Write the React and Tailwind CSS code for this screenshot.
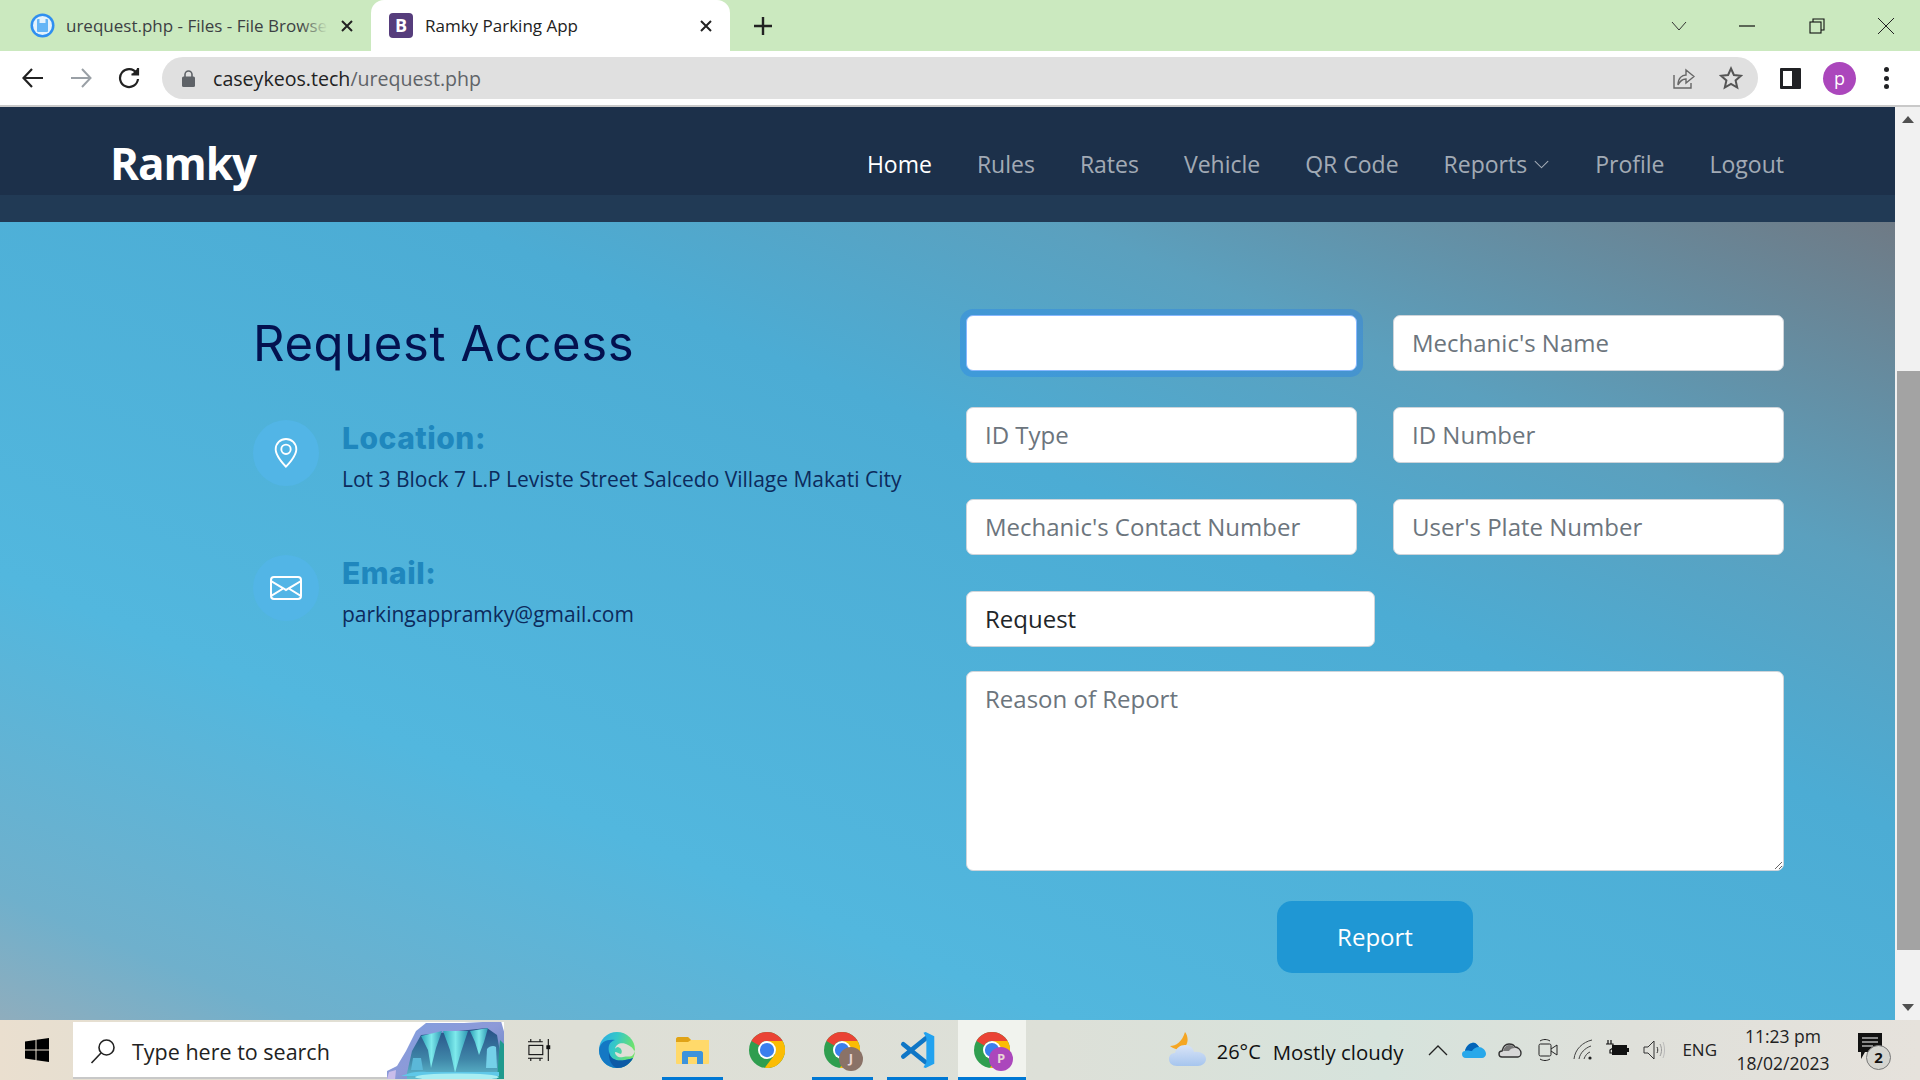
import React from 'react';
import { BsGeoAlt, BsEnvelope, BsChevronDown } from 'react-icons/bs';

function ChromeIcon({ size = 36 }) {
  return (
    <svg width={size} height={size} viewBox="0 0 48 48">
      <circle cx="24" cy="24" r="24" fill="#2f9e4f" />
      <path d="M3.22 12A24 24 0 0 1 44.78 12L24 12A12 12 0 0 0 13.6 18Z" fill="#ea4335" />
      <path d="M44.78 12A24 24 0 0 1 21 47.8L34.4 30L36 24L24 12Z" fill="#fbbc04" />
      <circle cx="24" cy="24" r="12" fill="#fff" />
      <circle cx="24" cy="24" r="9.5" fill="#3b7fed" />
    </svg>
  );
}

function ChromeBadge({ letter, color }) {
  return (
    <div className="relative w-[36px] h-[36px]">
      <ChromeIcon />
      <div className={`absolute left-[15px] top-[15px] w-[24px] h-[24px] rounded-full flex items-center justify-center text-[13px] font-bold text-[#e8d5d5] ${color}`}>
        {letter}
      </div>
    </div>
  );
}

function EdgeIcon() {
  return (
    <svg width="36" height="36" viewBox="0 0 36 36">
      <defs>
        <linearGradient id="edgeTop" x1="0" y1="0" x2="1" y2="0.3">
          <stop offset="0" stopColor="#2aa7e8" />
          <stop offset="0.5" stopColor="#35c8c8" />
          <stop offset="1" stopColor="#6fe36b" />
        </linearGradient>
      </defs>
      <circle cx="18" cy="18" r="18" fill="url(#edgeTop)" />
      <path d="M0 18C1 9 9 7 16 8C10 10 9 14 10 20C11 27 18 30 26 28C30 27 33 27 34 26C30 33 24 36 18 36C8 36 0 28 0 18Z" fill="#1478c4" />
      <path d="M10 20C11 27 18 30 26 28C30 27 33 27 34 26C30 33 24 36 18 36C13 35 9 27 10 20Z" fill="#0d5aa6" />
      <path d="M16 17C17 11 24 10 29 13C33 15 36 18 35 21C32 23 26 22 22 22C24 19 22 16 19 15C17.5 15 16.5 16 16 17Z" fill="#dfdfd7" />
      <path d="M16 20C16 24 20 26 24 25C28 24 30 25 33 24C35 22 36 20 36 18C33 22 27 22 23 22C20 22 18 20 16 20Z" fill="#dfdfd7" />
    </svg>
  );
}

function ExplorerIcon() {
  return (
    <svg width="33" height="27" viewBox="0 0 33 27">
      <path d="M0 2C0 1 1 0 2 0H12L15 3H33V26C33 26.5 32.5 27 32 27H1C0.5 27 0 26.5 0 26Z" fill="#ffd96a" />
      <path d="M0 2C0 1 1 0 2 0H12L15 3L12 5H0Z" fill="#e0a316" />
      <path d="M6 27V16C6 15 7 14 8 14H25C26 14 27 15 27 16V27H21V20H12V27Z" fill="#3d93dc" />
    </svg>
  );
}

function VsCodeIcon() {
  return (
    <svg width="36" height="36" viewBox="0 0 100 100">
      <path d="M12 34L74 84M12 68L74 18" stroke="#0f76c6" strokeWidth="13" strokeLinecap="round" fill="none" />
      <path d="M68 2L74 0L98 12V88L74 100L68 98L76 84V16Z" fill="#22a2ef" />
    </svg>
  );
}

function IceCave() {
  return (
    <svg width="117" height="57" viewBox="0 2 117 57" className="shrink-0 block">
      <defs>
        <linearGradient id="caveInner" x1="0" y1="0" x2="0" y2="1">
          <stop offset="0" stopColor="#264f86" />
          <stop offset="0.6" stopColor="#3f86a8" />
          <stop offset="1" stopColor="#62bfd0" />
        </linearGradient>
        <linearGradient id="caveOuter" x1="0" y1="0" x2="1" y2="1">
          <stop offset="0" stopColor="#7f9fe0" />
          <stop offset="0.5" stopColor="#8d9ad8" />
          <stop offset="1" stopColor="#5d7fc0" />
        </linearGradient>
        <linearGradient id="icicle" x1="0" y1="0" x2="1" y2="0">
          <stop offset="0" stopColor="#2fa4ba" />
          <stop offset="0.5" stopColor="#7eeaec" />
          <stop offset="1" stopColor="#2f98b4" />
        </linearGradient>
      </defs>
      <path d="M-1 60L0 51L10 46L19 31L29 11L39 3L77 3L114 1L118 15V60Z" fill="url(#caveOuter)" />
      <path d="M0 59L2 52L9 50L8 60Z" fill="#c9bdea" />
      <path d="M20 53L25 31L34 15L100 8L110 15L114 38L112 60H20Z" fill="url(#caveInner)" />
      <path d="M113 20L117 24V60H110Z" fill="#1f9a8e" />
      <path d="M34 16L55 11L49 28L44 48L41 30Z" fill="url(#icicle)" />
      <path d="M56 11L81 11L74 32L68 53L63 30Z" fill="url(#icicle)" />
      <path d="M83 11L101 8L97 22L92 35L88 22Z" fill="url(#icicle)" />
      <path d="M26 38L34 38L36 50H24Z" fill="#5bb8d8" />
      <path d="M99 48L100 29C102 26 107 25 109 27L110 48Z" fill="#74d0e8" />
      <path d="M14 56C24 52 30 51 40 52H112V56H14Z" fill="#5fc8e8" />
      <ellipse cx="70" cy="57" rx="42" ry="3.5" fill="#a8eef2" />
    </svg>
  );
}

function WeatherIcon() {
  return (
    <svg width="37" height="36" viewBox="0 0 37 36">
      <defs>
        <linearGradient id="cloudFill" x1="0" y1="0" x2="0" y2="1">
          <stop offset="0" stopColor="#d9e4f7" />
          <stop offset="1" stopColor="#a6c5ee" />
        </linearGradient>
      </defs>
      <path d="M16 0C19 4 20 10 16 15C12 19 6 18 1 14C7 14 13 10 16 0Z" fill="#f5a623" />
      <path d="M8 34C3 34 0 31 0 27C0 23 3 21 6 21C7 16 11 13 16 13C21 13 24 16 25 20C31 19 37 22 37 27C37 31 33 34 29 34Z" fill="url(#cloudFill)" />
    </svg>
  );
}

function Tray() {
  return (
    <div className="flex items-center ml-auto h-full">
      <WeatherIcon />
      <span className="ml-[11px] pt-[4px] text-[20px] text-[#111]">26°C</span>
      <span className="ml-[12px] pt-[4px] text-[20.4px] text-[#111]">Mostly cloudy</span>
      <svg className="ml-[25px]" width="20" height="12" viewBox="0 0 20 12"><path d="M1 11L10 2L19 11" stroke="#222" strokeWidth="1.3" fill="none" /></svg>
      <svg className="ml-[14px]" width="24" height="16" viewBox="0 0 24 16">
        <path d="M4 16C1 16 0 14 0 12C0 10 1.5 9 3 9C4 5 6 2 10 1C13 0 15 2 17 5C20 5 24 8 24 12C24 14 22 16 20 16Z" fill="#28a8ea" />
        <path d="M3 9C4 5 6 2 10 1C13 0 15 2 17 5C14 5 11 7 10 9C8 9 5 8 3 9Z" fill="#0364b8" />
      </svg>
      <svg className="ml-[12px]" width="24" height="16" viewBox="0 0 24 16">
        <path d="M4 15C2 15 1 14 1 12C1 10 2 9 4 9C5 5 7 2 11 2C14 2 16 3 17 5C20 5 23 8 23 11C23 14 21 15 20 15Z" fill="#d8d8d8" stroke="#333" strokeWidth="1.4" />
        <path d="M5 9C6 6 8 3 11 3C14 3 15 4 17 6C14 6 12 7 11 9Z" fill="#777" />
      </svg>
      <svg className="ml-[14px]" width="24" height="24" viewBox="0 0 24 24" fill="none" stroke="#222" strokeWidth="1">
        <rect x="3" y="6" width="12" height="12" rx="1.5" />
        <path d="M15 11L21 7V17L15 13" />
        <path d="M4 3C7 1 11 1 14 3M4 21C7 23 11 23 14 21" />
      </svg>
      <svg className="ml-[13px]" width="24" height="22" viewBox="0 0 24 22" fill="none" stroke="#444" strokeWidth="1">
        <path d="M1 20C2 10 10 3 19 1" />
        <path d="M6 20C7 14 12 9 18 7" />
        <path d="M11 20C12 17 14 14 17 13" />
        <circle cx="17" cy="19" r="1.6" fill="#222" stroke="none" />
      </svg>
      <svg className="ml-[8px]" width="24" height="20" viewBox="0 0 24 20">
        <path d="M3 0V4M6 0V4M1 4H8V8L5 10V13H7" stroke="#111" strokeWidth="1.2" fill="none" />
        <rect x="7" y="5" width="15" height="10" fill="#111" />
        <rect x="22" y="8" width="2" height="4" fill="#111" />
      </svg>
      <svg className="ml-[14px]" width="24" height="22" viewBox="0 0 24 22" fill="none" stroke="#333" strokeWidth="1">
        <path d="M1 8H5L11 2V20L5 14H1Z" />
        <path d="M14 8C15 10 15 12 14 14" />
        <path d="M17 5C19 9 19 13 17 17" stroke="#999" />
        <path d="M20 3C22 8 22 14 20 19" stroke="#bbb" />
      </svg>
      <span className="ml-[15px] text-[17px] text-[#222]">ENG</span>
      <div className="ml-[10px] w-[112px] flex flex-col items-center text-[17.5px] leading-[27px] text-[#222]">
        <span>11:23 pm</span>
        <span>18/02/2023</span>
      </div>
      <div className="relative ml-[18px] mr-[33px] w-[30px] h-[36px]">
        <svg width="26" height="28" viewBox="0 0 26 28">
          <path d="M1 1H25V20H8L4 27V20H1Z" fill="#111" />
          <path d="M5 6H21M5 10H21M5 14H16" stroke="#fff" strokeWidth="1.2" />
        </svg>
        <div className="absolute left-[9px] top-[13px] w-[25px] h-[25px] rounded-full bg-[#d5d5d0] border border-[#777] flex items-center justify-center text-[15px] font-bold text-[#111]">
          2
        </div>
      </div>
    </div>
  );
}

function Taskbar() {
  const apps = [
    { key: 'edge', icon: <EdgeIcon /> },
    { key: 'files', icon: <ExplorerIcon />, open: true },
    { key: 'chrome', icon: <ChromeIcon /> },
    { key: 'chrome-j', icon: <ChromeBadge letter="J" color="bg-[#8a7267]" />, open: true },
    { key: 'code', icon: <VsCodeIcon />, open: true },
    { key: 'chrome-p', icon: <ChromeBadge letter="P" color="bg-[#ab47bc]" />, open: true, active: true },
  ];

  return (
    <div className="h-[60px] shrink-0 flex items-center bg-[linear-gradient(to_right,#eadfcf_0%,#e3dfd2_8%,#dedfd6_30%,#dde0d8_55%,#d6e3dc_72%,#dfe0da_85%,#e6e2dc_100%)] font-['Open_Sans',sans-serif]">
      <div className="w-[73px] flex justify-center">
        <svg width="24" height="24" viewBox="0 0 24 24" fill="#000">
          <path d="M0 3.5L10.5 2V11.5H0ZM11.5 1.8L24 0V11.5H11.5ZM0 12.5H10.5V22L0 20.5ZM11.5 12.5H24V24L11.5 22.2Z" />
        </svg>
      </div>
      <div className="w-[431px] h-[57px] self-end mb-[1px] bg-white shadow-[inset_0_-2px_0_#c8c8c8] flex items-center overflow-hidden">
        <svg className="ml-[17px]" width="26" height="26" viewBox="0 0 26 26" fill="none" stroke="#222" strokeWidth="1.6">
          <circle cx="16.5" cy="9.5" r="7.5" />
          <path d="M11 15L1.5 25" />
        </svg>
        <span className="ml-[16px] pt-[3px] text-[21.5px] text-[#222]">Type here to search</span>
        <div className="ml-auto self-end"><IceCave /></div>
      </div>
      <div className="ml-[24px] w-[24px] flex justify-center">
        <svg width="26" height="24" viewBox="0 0 26 24" fill="none" stroke="#111" strokeWidth="1.2">
          <path d="M0 3H16M3 0V3M13 0V3" />
          <rect x="1" y="7" width="15" height="10" />
          <path d="M0 21H16M3 21V24M13 21V24" />
          <path d="M22 0V24" />
          <rect x="20.5" y="7.5" width="3" height="3" fill="#111" />
        </svg>
      </div>
      <div className="ml-[31px] flex gap-[7px] h-full">
        {apps.map((a) => (
          <div key={a.key} className={`relative w-[68px] h-full flex items-center justify-center ${a.active ? 'bg-[#f1f3ee]' : ''}`}>
            {a.icon}
            {a.open && <div className={`absolute bottom-0 h-[3px] bg-[#0078d4] ${a.active ? 'w-full' : 'w-[61px]'}`} />}
          </div>
        ))}
      </div>
      <Tray />
    </div>
  );
}

function BrowserChrome() {
  return (
    <div className="shrink-0 font-['Open_Sans',sans-serif]">
      <div className="h-[51px] bg-[#cbe9bf] flex items-end">
        <div className="w-[371px] h-full flex items-center pl-[30px] shrink-0">
          <svg width="25" height="25" viewBox="0 0 25 25" className="shrink-0">
            <circle cx="12.5" cy="12.5" r="12" fill="#2f8ff0" />
            <circle cx="12.5" cy="12.5" r="9.5" fill="#e3f2fd" />
            <rect x="7" y="6" width="11" height="13" rx="1" fill="#64b5f6" />
            <rect x="9.5" y="6" width="6" height="4" fill="#e3f2fd" />
          </svg>
          <div className="relative ml-[11px] w-[262px] text-[17px] text-[#3c4043] whitespace-nowrap overflow-hidden">
            urequest.php - Files - File Browse
            <div className="absolute right-0 top-0 bottom-0 w-[28px] bg-linear-to-r from-transparent to-[#cbe9bf]" />
          </div>
          <svg className="ml-[12px]" width="14" height="14" viewBox="0 0 14 14" stroke="#222" strokeWidth="2"><path d="M2 2L12 12M12 2L2 12" /></svg>
        </div>
        <div className="w-[359px] h-full bg-white rounded-t-[13px] flex items-center pl-[18px] shrink-0">
          <div className="w-[24px] h-[25px] rounded-[4px] bg-[#563d7c] flex items-center justify-center text-white text-[18px] font-bold">B</div>
          <span className="ml-[12px] w-[262px] text-[17px] text-[#222]">Ramky Parking App</span>
          <svg className="ml-[12px]" width="14" height="14" viewBox="0 0 14 14" stroke="#222" strokeWidth="2"><path d="M2 2L12 12M12 2L2 12" /></svg>
        </div>
        <svg className="ml-[24px] self-center" width="18" height="18" viewBox="0 0 18 18" stroke="#222" strokeWidth="2.4"><path d="M9 0V18M0 9H18" /></svg>
        <div className="ml-auto h-full flex items-center">
          <svg width="16" height="10" viewBox="0 0 16 10" fill="none" stroke="#333"><path d="M1 1L8 9L15 1" /></svg>
          <svg className="ml-[52px]" width="16" height="2" viewBox="0 0 16 2"><path d="M0 1H16" stroke="#111" strokeWidth="1.2" /></svg>
          <svg className="ml-[54px]" width="16" height="16" viewBox="0 0 16 16" fill="none" stroke="#111" strokeWidth="1.1"><rect x="1" y="4" width="11" height="11" /><path d="M4 4V1H15V12H12" /></svg>
          <svg className="ml-[53px] mr-[26px]" width="16" height="16" viewBox="0 0 16 16" stroke="#222" strokeWidth="1"><path d="M0 0L16 16M16 0L0 16" /></svg>
        </div>
      </div>
      <div className="h-[54px] bg-white flex items-center">
        <div className="w-[162px] flex items-center shrink-0">
          <svg className="ml-[22px]" width="22" height="20" viewBox="0 0 22 20" fill="none" stroke="#222" strokeWidth="2.2"><path d="M21 10H2M10 1L1.5 10L10 19" /></svg>
          <svg className="ml-[26px]" width="22" height="20" viewBox="0 0 22 20" fill="none" stroke="#9aa0a6" strokeWidth="2"><path d="M1 10H20M12 1L20.5 10L12 19" /></svg>
          <svg className="ml-[26px]" width="22" height="22" viewBox="0 0 22 22" fill="none" stroke="#222" strokeWidth="2.2"><path d="M18.5 6A9 9 0 1 0 20 12" /><path d="M20 1V7.5H13.5" fill="#222" /></svg>
        </div>
        <div className="w-[1596px] h-[42px] rounded-full bg-[#e0e0e0] flex items-center shrink-0">
          <svg className="ml-[20px]" width="13" height="17" viewBox="0 0 13 17"><path d="M3 7V4.5a3.5 3.5 0 0 1 7 0V7" fill="none" stroke="#5f6368" strokeWidth="1.6" /><rect y="6.5" width="13" height="10.5" rx="1.5" fill="#5f6368" /></svg>
          <span className="ml-[18px] pt-[2px] text-[19.6px] text-[#222]">caseykeos.tech<span className="text-[#5f6368]">/urequest.php</span></span>
          <svg className="ml-auto" width="24" height="24" viewBox="0 0 24 24" fill="none" stroke="#666" strokeWidth="1.4"><path d="M3 9V22H20V17" /><path d="M7 19C7 12 11 9 15 9V4L23 10.5L15 17V13C11 13 9 15 7 19Z" /></svg>
          <svg className="ml-[24px] mr-[15px]" width="24" height="24" viewBox="0 0 24 24" fill="none" stroke="#555" strokeWidth="2"><path d="M12 2.5L14.9 9L22 9.7L16.6 14.4L18.2 21.5L12 17.8L5.8 21.5L7.4 14.4L2 9.7L9.1 9Z" /></svg>
        </div>
        <svg className="ml-[22px]" width="21" height="21" viewBox="0 0 21 21"><rect width="21" height="21" rx="1" fill="#202124" /><rect x="3" y="3" width="9" height="15" fill="#fff" /></svg>
        <div className="ml-[22px] w-[33px] h-[33px] rounded-full bg-[#ab47bc] flex items-center justify-center text-white text-[18px] leading-none">p</div>
        <div className="ml-[28px] flex flex-col gap-[3.5px]">
          <div className="w-[5px] h-[5px] rounded-full bg-[#202124]" />
          <div className="w-[5px] h-[5px] rounded-full bg-[#202124]" />
          <div className="w-[5px] h-[5px] rounded-full bg-[#202124]" />
        </div>
      </div>
      <div className="h-[2px] bg-[#c9c9c9]" />
    </div>
  );
}

function Navbar() {
  const links = ['Home', 'Rules', 'Rates', 'Vehicle', 'QR Code', 'Reports', 'Profile', 'Logout'];
  return (
    <div className="shrink-0">
      <div className="h-[88px] bg-[#1c304a] flex items-center pl-[110px] pr-[111px]">
        <span className="relative top-[12px] font-['Open_Sans',sans-serif] text-[44px] font-bold text-white tracking-[-1px]">Ramky</span>
        <nav className="relative top-[13px] ml-auto flex gap-[45px] text-[23px] font-medium font-['Open_Sans',sans-serif]">
          {links.map((l) => (
            <a key={l} href="#" className={`flex items-center gap-[6px] ${l === 'Home' ? 'text-white' : 'text-white/60'}`}>
              {l}
              {l === 'Reports' && <BsChevronDown className="w-[17px] h-[17px]" />}
            </a>
          ))}
        </nav>
      </div>
      <div className="h-[27px] bg-[#213a55]" />
    </div>
  );
}

function Field({ placeholder, focused, value, className = '' }) {
  return (
    <input
      defaultValue={value}
      placeholder={placeholder}
      className={`h-[56px] px-[18px] pb-[2px] rounded-[7px] bg-white border text-[24px] text-[#212529] placeholder:text-[#6c757d] outline-none ${focused ? 'border-[#86b7fe] ring-[6px] ring-[#0d6efd]/25' : 'border-[#ced4da]'} ${className}`}
    />
  );
}

function InfoRow({ icon, title, text }) {
  return (
    <div className="flex">
      <div className="w-[66px] h-[66px] rounded-full bg-[#52b5e6] flex items-center justify-center text-white shrink-0">{icon}</div>
      <div className="ml-[23px]">
        <h4 className="font-['Inter',sans-serif] font-extrabold text-[30px] leading-[36px] tracking-[0.5px] text-[#1f87bd]">{title}</h4>
        <p className="mt-[6px] text-[21px] leading-[34px] text-[#0c2a5c] whitespace-nowrap">{text}</p>
      </div>
    </div>
  );
}

function RequestPage() {
  return (
    <div className="flex-1 bg-[linear-gradient(to_top_right,#8fadbd_0%,#6fb0cc_8%,#52b7de_28%,#4cacd4_62%,#5ba0be_78%,#6f7a85_100%)] pt-[93px] pl-[253px] pr-[111px] flex font-['Open_Sans',sans-serif]">
      <div className="w-[713px] shrink-0">
        <h1 className="pt-[1px] font-['Inter',sans-serif] text-[49px] leading-[56px] font-normal tracking-[0.6px] text-[#03114f]">Request Access</h1>
        <div className="mt-[48px] flex flex-col gap-[59px]">
          <InfoRow icon={<BsGeoAlt className="w-[30px] h-[30px]" />} title="Location:" text="Lot 3 Block 7 L.P Leviste Street Salcedo Village Makati City" />
          <InfoRow icon={<BsEnvelope className="w-[32px] h-[32px]" />} title="Email:" text="parkingappramky@gmail.com" />
        </div>
      </div>
      <div className="w-[818px] flex flex-col">
        <div className="grid grid-cols-2 gap-x-[36px] gap-y-[36px]">
          <Field focused />
          <Field placeholder="Mechanic's Name" />
          <Field placeholder="ID Type" />
          <Field placeholder="ID Number" />
          <Field placeholder="Mechanic's Contact Number" />
          <Field placeholder="User's Plate Number" />
        </div>
        <Field value="Request" className="mt-[36px] w-[409px]" />
        <textarea
          placeholder="Reason of Report"
          className="mt-[24px] h-[200px] px-[18px] py-[9px] rounded-[7px] bg-white border border-[#ced4da] text-[24px] placeholder:text-[#6c757d] outline-none"
        />
        <button className="mt-[30px] self-center w-[196px] h-[72px] rounded-[15px] bg-[#1f97d4] text-white text-[24px]">Report</button>
      </div>
    </div>
  );
}

function Scrollbar() {
  return (
    <div className="w-[25px] shrink-0 bg-[#f1f1f1] flex flex-col items-center">
      <div className="mt-[9px] w-0 h-0 border-x-[6px] border-x-transparent border-b-[7px] border-b-[#505050]" />
      <div className="mt-[248px] ml-[2px] w-[23px] h-[579px] bg-[#a3a3a3]" />
      <div className="mt-[54px] w-0 h-0 border-x-[6px] border-x-transparent border-t-[7px] border-t-[#505050]" />
    </div>
  );
}

export default function App() {
  return (
    <div className="w-[1920px] h-[1080px] flex flex-col overflow-hidden bg-white">
      <BrowserChrome />
      <div className="flex-1 min-h-0 flex">
        <div className="flex-1 flex flex-col min-w-0">
          <Navbar />
          <RequestPage />
        </div>
        <Scrollbar />
      </div>
      <Taskbar />
    </div>
  );
}
